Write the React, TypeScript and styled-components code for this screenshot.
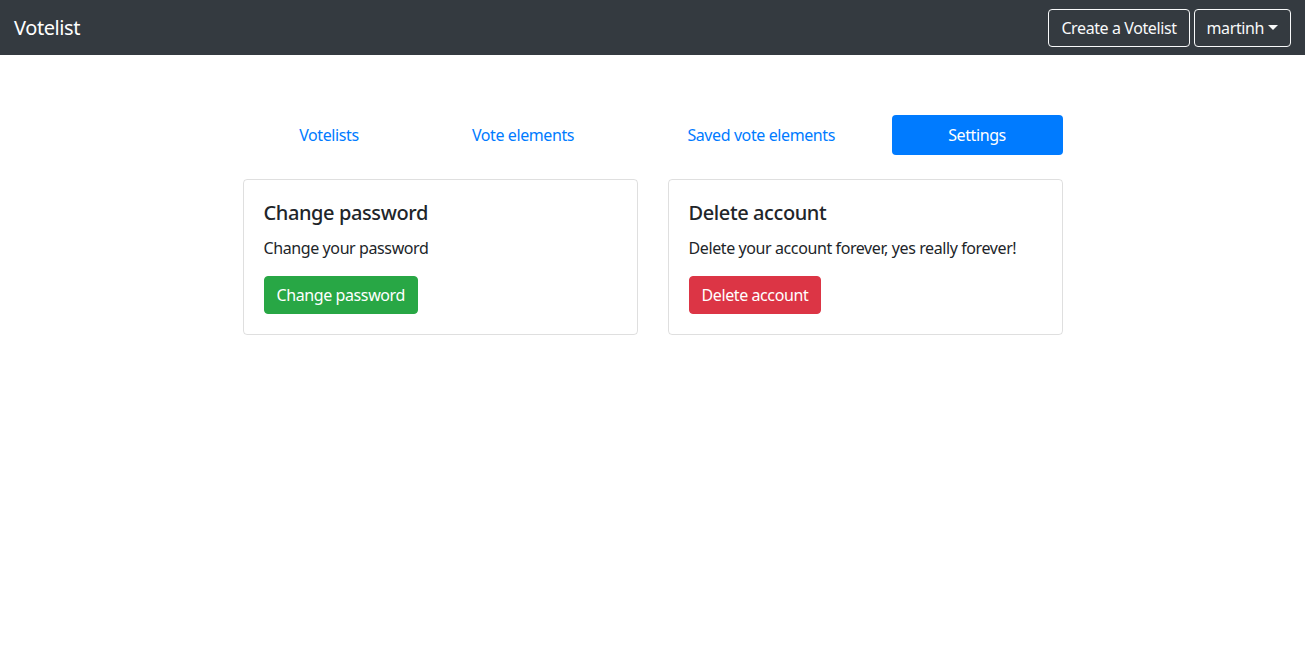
import React from "react";
import styled, { createGlobalStyle } from "styled-components";

const GlobalStyle = createGlobalStyle`
  *, *::before, *::after {
    box-sizing: border-box;
  }

  body {
    margin: 0;
    font-family: "Noto Sans", "Open Sans", Arial, sans-serif;
    font-size: 16px;
    line-height: 1.5;
    letter-spacing: -0.025em;
    color: #212529;
    background: #fff;
  }
`;

const Navbar = styled.nav`
  display: flex;
  align-items: center;
  justify-content: space-between;
  height: 55px;
  padding: 0 14px;
  background-color: #343a40;
`;

const Brand = styled.a`
  font-size: 20px;
  line-height: 30px;
  color: #fff;
  text-decoration: none;
`;

const NavActions = styled.div`
  display: flex;
  gap: 4px;
`;

const OutlineButton = styled.button`
  display: inline-flex;
  align-items: center;
  height: 38px;
  padding: 0 12px;
  font: inherit;
  letter-spacing: inherit;
  color: #f8f9fa;
  background: transparent;
  border: 1px solid #f8f9fa;
  border-radius: 4px;
  cursor: pointer;
`;

const Caret = styled.span`
  display: inline-block;
  margin-left: 4px;
  border-top: 5px solid currentColor;
  border-left: 5px solid transparent;
  border-right: 5px solid transparent;
`;

const Container = styled.main`
  width: 850px;
  margin: 0 auto;
  padding: 60px 15px 0;
`;

const Pills = styled.ul`
  display: flex;
  margin: 0 0 24px;
  padding: 0;
  list-style: none;
`;

const PillItem = styled.li`
  flex: 1 1 auto;
  text-align: center;
`;

const PillLink = styled.a<{ $active?: boolean }>`
  display: block;
  padding: 8px 16px;
  border-radius: 4px;
  text-decoration: none;
  color: ${(p) => (p.$active ? "#fff" : "#007bff")};
  background-color: ${(p) => (p.$active ? "#007bff" : "transparent")};
`;

const Grid = styled.div`
  display: grid;
  grid-template-columns: 1fr 1fr;
  gap: 30px;
`;

const Card = styled.div`
  border: 1px solid rgba(0, 0, 0, 0.125);
  border-radius: 4px;
  padding: 20px;
`;

const CardTitle = styled.h5`
  margin: 0 0 12px;
  padding-top: 1px;
  font-size: 20px;
  font-weight: 500;
  line-height: 23px;
`;

const CardText = styled.p`
  margin: 0 0 16px;
`;

const ActionButton = styled.button<{ $variant: "success" | "danger" }>`
  height: 38px;
  padding: 0 12px;
  font: inherit;
  letter-spacing: inherit;
  color: #fff;
  border: 1px solid
    ${(p) => (p.$variant === "success" ? "#28a745" : "#dc3545")};
  background-color: ${(p) =>
    p.$variant === "success" ? "#28a745" : "#dc3545"};
  border-radius: 4px;
  cursor: pointer;
`;

const TABS = ["Votelists", "Vote elements", "Saved vote elements", "Settings"];

export default function App() {
  return (
    <>
      <GlobalStyle />
      <Navbar>
        <Brand href="#">Votelist</Brand>
        <NavActions>
          <OutlineButton>Create a Votelist</OutlineButton>
          <OutlineButton>
            martinh
            <Caret />
          </OutlineButton>
        </NavActions>
      </Navbar>

      <Container>
        <Pills>
          {TABS.map((tab) => (
            <PillItem key={tab}>
              <PillLink href="#" $active={tab === "Settings"}>
                {tab}
              </PillLink>
            </PillItem>
          ))}
        </Pills>

        <Grid>
          <Card>
            <CardTitle>Change password</CardTitle>
            <CardText>Change your password</CardText>
            <ActionButton $variant="success">Change password</ActionButton>
          </Card>
          <Card>
            <CardTitle>Delete account</CardTitle>
            <CardText>Delete your account forever, yes really forever!</CardText>
            <ActionButton $variant="danger">Delete account</ActionButton>
          </Card>
        </Grid>
      </Container>
    </>
  );
}
